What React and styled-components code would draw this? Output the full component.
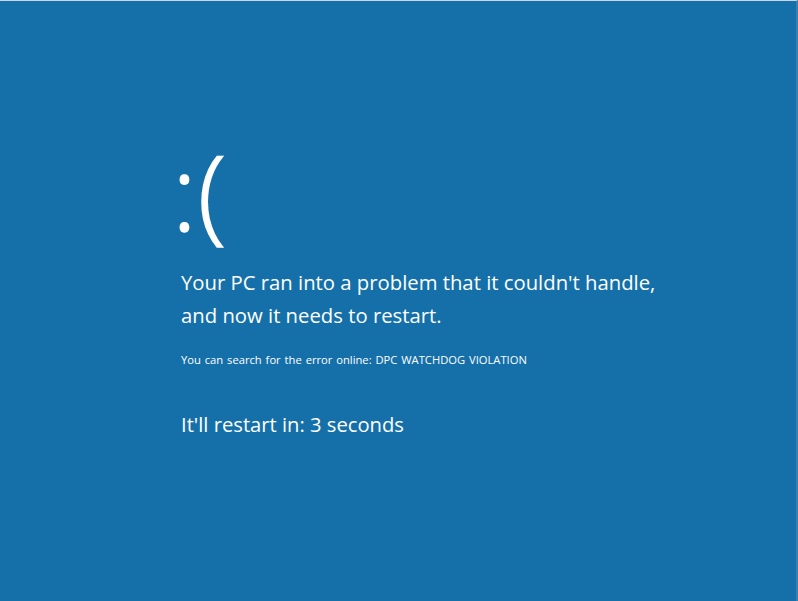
import styled, { createGlobalStyle } from "styled-components";

const GlobalStyle = createGlobalStyle`
  html, body {
    margin: 0;
    padding: 0;
    background: #1570aa;
  }
`;

const Screen = styled.div`
  box-sizing: border-box;
  width: 798px;
  height: 601px;
  background: #1570aa;
  border-top: 1px solid #cdd6e0;
  border-right: 2px solid #3a7fae;
  color: #ffffff;
  font-family: "Open Sans", "Noto Sans", sans-serif;
  padding: 138px 0 0 181px;
  overflow: hidden;
`;

const Face = styled.div`
  font-size: 104px;
  font-weight: 300;
  line-height: 1;
  margin-left: -9px;
  height: 121px;
  letter-spacing: 1px;
  -webkit-text-stroke: 1.5px #ffffff;
`;

const Message = styled.div`
  margin-top: 6px;
  font-size: 20.3px;
  line-height: 33px;
  max-width: 520px;
`;

const Hint = styled.div`
  margin-top: 20px;
  font-size: 11.2px;
  line-height: 16px;
  word-spacing: 1px;
`;

const Countdown = styled.div`
  margin-top: 42px;
  font-size: 20.2px;
  line-height: 28px;
`;

export default function App() {
  return (
    <>
      <GlobalStyle />
      <Screen>
        <Face>:(</Face>
        <Message>
          Your PC ran into a problem that it couldn't handle,
          <br />
          and now it needs to restart.
        </Message>
        <Hint>You can search for the error online: DPC WATCHDOG VIOLATION</Hint>
        <Countdown>It'll restart in: 3 seconds</Countdown>
      </Screen>
    </>
  );
}
